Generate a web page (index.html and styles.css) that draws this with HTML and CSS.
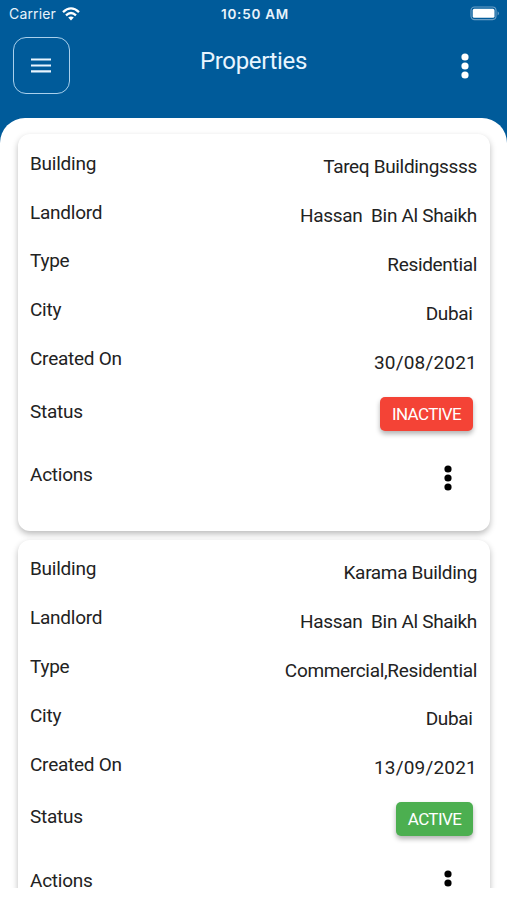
FILE: index.html
```html
<!DOCTYPE html>
<html lang="en">

<head>
  <meta charset="UTF-8">
  <meta name="viewport" content="width=device-width, initial-scale=1.0">
  <title>Properties</title>
  <link rel="stylesheet" href="styles.css">
</head>

<body>
  <div class="app">
    <div class="status-bar">
      <div class="carrier">
        <span>Carrier</span>
        <svg class="wifi" viewBox="0 0 18 14" width="18" height="14">
          <path d="M1 5.2 Q9 -2.4 17 5.2" />
          <path d="M4 8.3 Q9 3.6 14 8.3" />
          <path class="wifi-dot" d="M6.2 10.6 Q9 8.2 11.8 10.6 L9 13.6 Z" />
        </svg>
      </div>
      <span class="time">10:50 AM</span>
      <div class="battery-wrap">
        <svg viewBox="0 0 31 15" width="31" height="15">
          <rect class="battery-case" x="1" y="1" width="25" height="12.6" rx="3.5" />
          <rect x="2.7" y="2.8" width="21.8" height="9" rx="1.6" fill="#fff" />
          <path class="battery-tip" d="M27.6 5.2 Q30.4 7.3 27.6 9.4 Z" />
        </svg>
      </div>
    </div>

    <header>
      <button class="menu-btn">
        <svg viewBox="0 0 20 15" width="20" height="15">
          <path d="M0 1.5H20M0 7.5H20M0 13.3H20" />
        </svg>
      </button>
      <h1>Properties</h1>
      <svg class="dots" viewBox="0 0 8 26" width="8" height="26">
        <circle cx="4" cy="4" r="3.6" />
        <circle cx="4" cy="13" r="3.6" />
        <circle cx="4" cy="22" r="3.6" />
      </svg>
    </header>

    <main>
      <div class="card">
        <div class="row"><span class="label">Building</span><span class="value">Tareq Buildingssss</span></div>
        <div class="row"><span class="label">Landlord</span><span class="value">Hassan  Bin Al Shaikh</span></div>
        <div class="row"><span class="label">Type</span><span class="value">Residential</span></div>
        <div class="row"><span class="label">City</span><span class="value">Dubai </span></div>
        <div class="row"><span class="label">Created On</span><span class="value date">30/08/2021</span></div>
        <div class="row status"><span class="label">Status</span><span class="badge inactive">INACTIVE</span></div>
        <div class="row actions">
          <span class="label">Actions</span>
          <svg class="dots" viewBox="0 0 8 26" width="8" height="26">
            <circle cx="4" cy="4" r="3.6" />
            <circle cx="4" cy="13" r="3.6" />
            <circle cx="4" cy="22" r="3.6" />
          </svg>
        </div>
      </div>

      <div class="card">
        <div class="row"><span class="label">Building</span><span class="value">Karama Building</span></div>
        <div class="row"><span class="label">Landlord</span><span class="value">Hassan  Bin Al Shaikh</span></div>
        <div class="row"><span class="label">Type</span><span class="value">Commercial,Residential</span></div>
        <div class="row"><span class="label">City</span><span class="value">Dubai </span></div>
        <div class="row"><span class="label">Created On</span><span class="value date">13/09/2021</span></div>
        <div class="row status"><span class="label">Status</span><span class="badge active">ACTIVE</span></div>
        <div class="row actions">
          <span class="label">Actions</span>
          <svg class="dots" viewBox="0 0 8 26" width="8" height="26">
            <circle cx="4" cy="4" r="3.6" />
            <circle cx="4" cy="13" r="3.6" />
            <circle cx="4" cy="22" r="3.6" />
          </svg>
        </div>
      </div>
    </main>
  </div>
</body>

</html>
```
FILE: styles.css
```css
* {
  box-sizing: border-box;
}

body {
  margin: 0;
  background: #fff;
  color: #222;
  font-family: Roboto, "Noto Sans", sans-serif;
  font-size: 19px;
}

.app {
  height: 888px;
  overflow: hidden;
  background: #005b9a;
}

.status-bar {
  display: grid;
  grid-template-columns: 1fr auto 1fr;
  align-items: center;
  height: 27px;
  padding: 0 6px 0 9px;
  color: #e8f3fb;
  font-family: Inter, sans-serif;
  font-size: 14px;
}

.carrier {
  display: flex;
  align-items: center;
  gap: 6px;
  letter-spacing: 0.15px;
}

.wifi {
  fill: none;
  stroke: #fff;
  stroke-width: 2.3;
}

.wifi .wifi-dot {
  fill: #fff;
  stroke: none;
}

.time {
  font-size: 13.5px;
  font-weight: 600;
  letter-spacing: 0.75px;
}

.battery-wrap {
  display: flex;
  justify-content: flex-end;
}

.battery-case {
  fill: none;
  stroke: #6b9fc6;
  stroke-width: 1.1;
}

.battery-tip {
  fill: #6b9fc6;
}

header {
  display: grid;
  grid-template-columns: 57px 1fr 57px;
  height: 91px;
  padding: 10px 13px 0;
}

.menu-btn {
  display: flex;
  align-items: center;
  justify-content: center;
  width: 57px;
  height: 57px;
  padding: 0 1px 0 0;
  border: 1.5px solid #a9d0ec;
  border-radius: 13px;
  background: none;
}

.menu-btn path {
  stroke: #e8f5ff;
  stroke-width: 2.2;
}

h1 {
  margin: 10px 0 0;
  color: #e8f5ff;
  font-size: 24px;
  font-weight: 400;
  letter-spacing: -0.35px;
  line-height: 28px;
  text-align: center;
}

header .dots {
  justify-self: end;
  margin: 16px 25px 0 0;
  fill: #fff;
}

main {
  display: flex;
  flex-direction: column;
  gap: 9px;
  height: 800px;
  padding: 16px 17px 0 18px;
  border-radius: 25px 25px 0 0;
  background: #fff;
}

.card {
  flex: none;
  height: 396.6px;
  padding: 5px 13px 0 12px;
  border-radius: 12px;
  background: #fff;
  box-shadow: 0 3px 6px rgba(0, 0, 0, 0.27);
}

.row {
  display: flex;
  align-items: center;
  justify-content: space-between;
  height: 48.8px;
  line-height: 24px;
  white-space: pre;
}

.label {
  padding-top: 1px;
  letter-spacing: -0.25px;
}

.value {
  padding-top: 8px;
  letter-spacing: -0.33px;
}

.value.date {
  letter-spacing: 0.2px;
}

.row.status {
  height: 56.8px;
}

.row.actions {
  height: 70.2px;
}

.badge {
  height: 34px;
  margin: 5px 4px 0 0;
  border-radius: 5px;
  color: #fff;
  font-size: 17px;
  letter-spacing: -0.6px;
  line-height: 34px;
  text-align: center;
  box-shadow: 0 3px 5px rgba(0, 0, 0, 0.3);
}

.inactive {
  width: 93px;
  background: #f44336;
}

.active {
  width: 77px;
  background: #4caf50;
}

.actions .dots {
  margin: 6px 25px 0 0;
  fill: #000;
}
```
